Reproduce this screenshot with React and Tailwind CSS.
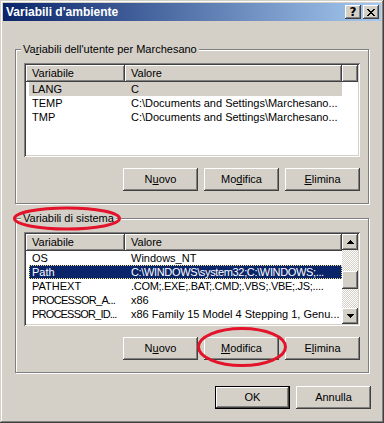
import React from "react";

const RAISED =
  "shadow-[inset_-1px_-1px_#404040,inset_1px_1px_#ffffff,inset_-2px_-2px_#808080,inset_2px_2px_#d4d0c8]";

function Btn({ children, isDefault }) {
  return (
    <div
      className={
        "w-[75px] h-[23px] flex items-center justify-center bg-[#d4d0c8] text-black " +
        (isDefault
          ? "border border-black shadow-[inset_-1px_-1px_#404040,inset_1px_1px_#ffffff,inset_-2px_-2px_#808080]"
          : RAISED)
      }
    >
      <span className="leading-[13px]">{children}</span>
    </div>
  );
}

function U({ children }) {
  return <span className="underline underline-offset-[1px] decoration-1">{children}</span>;
}

function HeaderCell({ children, className }) {
  return (
    <div
      className={
        "h-[17px] leading-[16px] pl-[6px] bg-[#d4d0c8] shadow-[inset_-1px_-1px_#404040,inset_1px_1px_#ffffff,inset_-2px_-2px_#808080] whitespace-nowrap overflow-hidden " +
        className
      }
    >
      {children}
    </div>
  );
}

function Row({ name, value, state, nameCls = "", valueCls = "" }) {
  let cls = "text-black";
  if (state === "gray") cls = "bg-[#d4d0c8] text-black";
  if (state === "sel")
    cls =
      "bg-[#0a246a] text-white outline outline-1 outline-dotted outline-[#f2dc8c] -outline-offset-1";
  return (
    <div className={"ml-[3px] w-[313px] h-[14px] leading-[14px] flex whitespace-nowrap " + cls}>
      <div className={"w-[96px] pl-[3px] overflow-hidden " + nameCls}>{name}</div>
      <div className={"flex-1 pl-[6px] overflow-hidden " + valueCls}>{value}</div>
    </div>
  );
}

function Arrow({ down }) {
  const rows = [1, 3, 5, 7];
  const order = down ? [...rows].reverse() : rows;
  return (
    <svg width="7" height="4" viewBox="0 0 7 4" shapeRendering="crispEdges">
      {order.map((w, i) => (
        <rect key={i} x={(7 - w) / 2} y={i} width={w} height="1" fill="#000" />
      ))}
    </svg>
  );
}

function ScrollBar() {
  return (
    <div className="w-[16px] flex flex-col">
      <div className={"h-[16px] bg-[#d4d0c8] flex items-center justify-center " + RAISED}>
        <Arrow />
      </div>
      <div className="flex-1 pt-[21px] bg-[repeating-conic-gradient(#d4d0c8_0_25%,#ffffff_0_50%)] bg-[length:2px_2px]">
        <div className={"h-[18px] bg-[#d4d0c8] " + RAISED}></div>
      </div>
      <div className={"h-[16px] bg-[#d4d0c8] flex items-center justify-center " + RAISED}>
        <Arrow down />
      </div>
    </div>
  );
}

function ListView({ rows, scroll }) {
  return (
    <div className="w-[336px] h-[94px] bg-white p-[2px] flex shadow-[inset_1px_1px_#808080,inset_-1px_-1px_#ffffff,inset_2px_2px_#404040,inset_-2px_-2px_#d4d0c8]">
      <div className="flex-1 flex flex-col overflow-hidden">
        <div className="flex">
          <HeaderCell className="w-[99px]">Variabile</HeaderCell>
          <HeaderCell className="w-[217px]">Valore</HeaderCell>
          {!scroll && <HeaderCell className="flex-1"></HeaderCell>}
        </div>
        {rows.map((r, i) => (
          <Row key={i} {...r} />
        ))}
      </div>
      {scroll && <ScrollBar />}
    </div>
  );
}

function GroupBox({ label, children, className = "" }) {
  return (
    <div
      className={
        "relative w-[354px] border border-[#808080] shadow-[inset_1px_1px_#ffffff,1px_1px_#ffffff] pt-[13px] px-[8px] pb-[12px] " +
        className
      }
    >
      <span className="absolute left-[5px] top-[-7px] bg-[#d4d0c8] px-[2px] leading-[13px] whitespace-nowrap">
        {label}
      </span>
      {children}
    </div>
  );
}

const CloseGlyph = () => {
  const px = ["11....11", ".11..11.", "..1111..", "...11...", "..1111..", ".11..11.", "11....11"];
  const rects = [];
  px.forEach((row, y) =>
    row.split("").forEach((c, x) => {
      if (c === "1") rects.push(<rect key={x + "-" + y} x={x} y={y} width="1" height="1" fill="#000" />);
    })
  );
  return (
    <svg width="8" height="7" viewBox="0 0 8 7" shapeRendering="crispEdges">
      {rects}
    </svg>
  );
};

export default function App() {
  return (
    <div className="relative w-[384px] h-[423px] bg-[#d4d0c8] p-[3px] flex flex-col font-['Liberation_Sans',Arial,sans-serif] text-[11px] text-black shadow-[inset_-1px_-1px_#404040,inset_1px_1px_#d4d0c8,inset_-2px_-2px_#808080,inset_2px_2px_#ffffff] overflow-hidden">
      {/* Title bar */}
      <div className="h-[18px] flex items-center bg-[linear-gradient(to_right,#0a246a,#a6caf0)] pl-[3px] pr-[2px]">
        <span className="flex-1 text-white font-bold text-[12px] leading-[14px] whitespace-nowrap">
          Variabili d'ambiente
        </span>
        <div className={"w-[16px] h-[14px] bg-[#d4d0c8] flex items-center justify-center " + RAISED}>
          <span className="font-bold text-[12px] leading-[12px] font-['DejaVu_Sans',sans-serif] mt-[-1px]">?</span>
        </div>
        <div className={"ml-[2px] w-[16px] h-[14px] bg-[#d4d0c8] flex items-center justify-center " + RAISED}>
          <CloseGlyph />
        </div>
      </div>

      {/* Content */}
      <div className="pt-[28px] px-[12px] flex flex-col">
        <GroupBox
          label={
            <>
              Va<U>r</U>iabili dell'utente per Marchesano
            </>
          }
        >
          <ListView
            rows={[
              { name: "LANG", value: "C", state: "gray" },
              { name: "TEMP", value: "C:\\Documents and Settings\\Marchesano..." },
              { name: "TMP", value: "C:\\Documents and Settings\\Marchesano..." },
            ]}
          />
          <div className="mt-[11px] flex justify-end gap-[6px]">
            <Btn>
              N<U>u</U>ovo
            </Btn>
            <Btn>
              Mo<U>d</U>ifica
            </Btn>
            <Btn>
              <U>E</U>limina
            </Btn>
          </div>
        </GroupBox>

        <GroupBox label="Variabili di sistema" className="mt-[14px]">
          <ListView
            scroll
            rows={[
              { name: "OS", value: "Windows_NT" },
              {
                name: "Path",
                value: "C:\\WINDOWS\\system32;C:\\WINDOWS;...",
                state: "sel",
                valueCls: "tracking-[-0.35px]",
              },
              {
                name: "PATHEXT",
                value: ".COM;.EXE;.BAT;.CMD;.VBS;.VBE;.JS;....",
                valueCls: "tracking-[-0.3px]",
              },
              { name: "PROCESSOR_A...", value: "x86", nameCls: "tracking-[-0.7px]" },
              {
                name: "PROCESSOR_ID...",
                value: "x86 Family 15 Model 4 Stepping 1, Genu...",
                nameCls: "tracking-[-0.8px]",
              },
            ]}
          />
          <div className="mt-[11px] flex justify-end gap-[6px]">
            <Btn>
              N<U>u</U>ovo
            </Btn>
            <Btn>
              <U>M</U>odifica
            </Btn>
            <Btn>
              E<U>l</U>imina
            </Btn>
          </div>
        </GroupBox>

        <div className="mt-[13px] w-[356px] flex justify-end gap-[6px]">
          <Btn isDefault>OK</Btn>
          <Btn>Annulla</Btn>
        </div>
      </div>

      {/* Red annotation ellipses */}
      <svg className="absolute left-0 top-0 pointer-events-none" width="384" height="423">
        <ellipse cx="67" cy="218.5" rx="52.5" ry="10.5" fill="none" stroke="#e3132b" strokeWidth="3" />
        <ellipse cx="242" cy="347" rx="43.5" ry="18.5" fill="none" stroke="#e3132b" strokeWidth="3" />
      </svg>
    </div>
  );
}
